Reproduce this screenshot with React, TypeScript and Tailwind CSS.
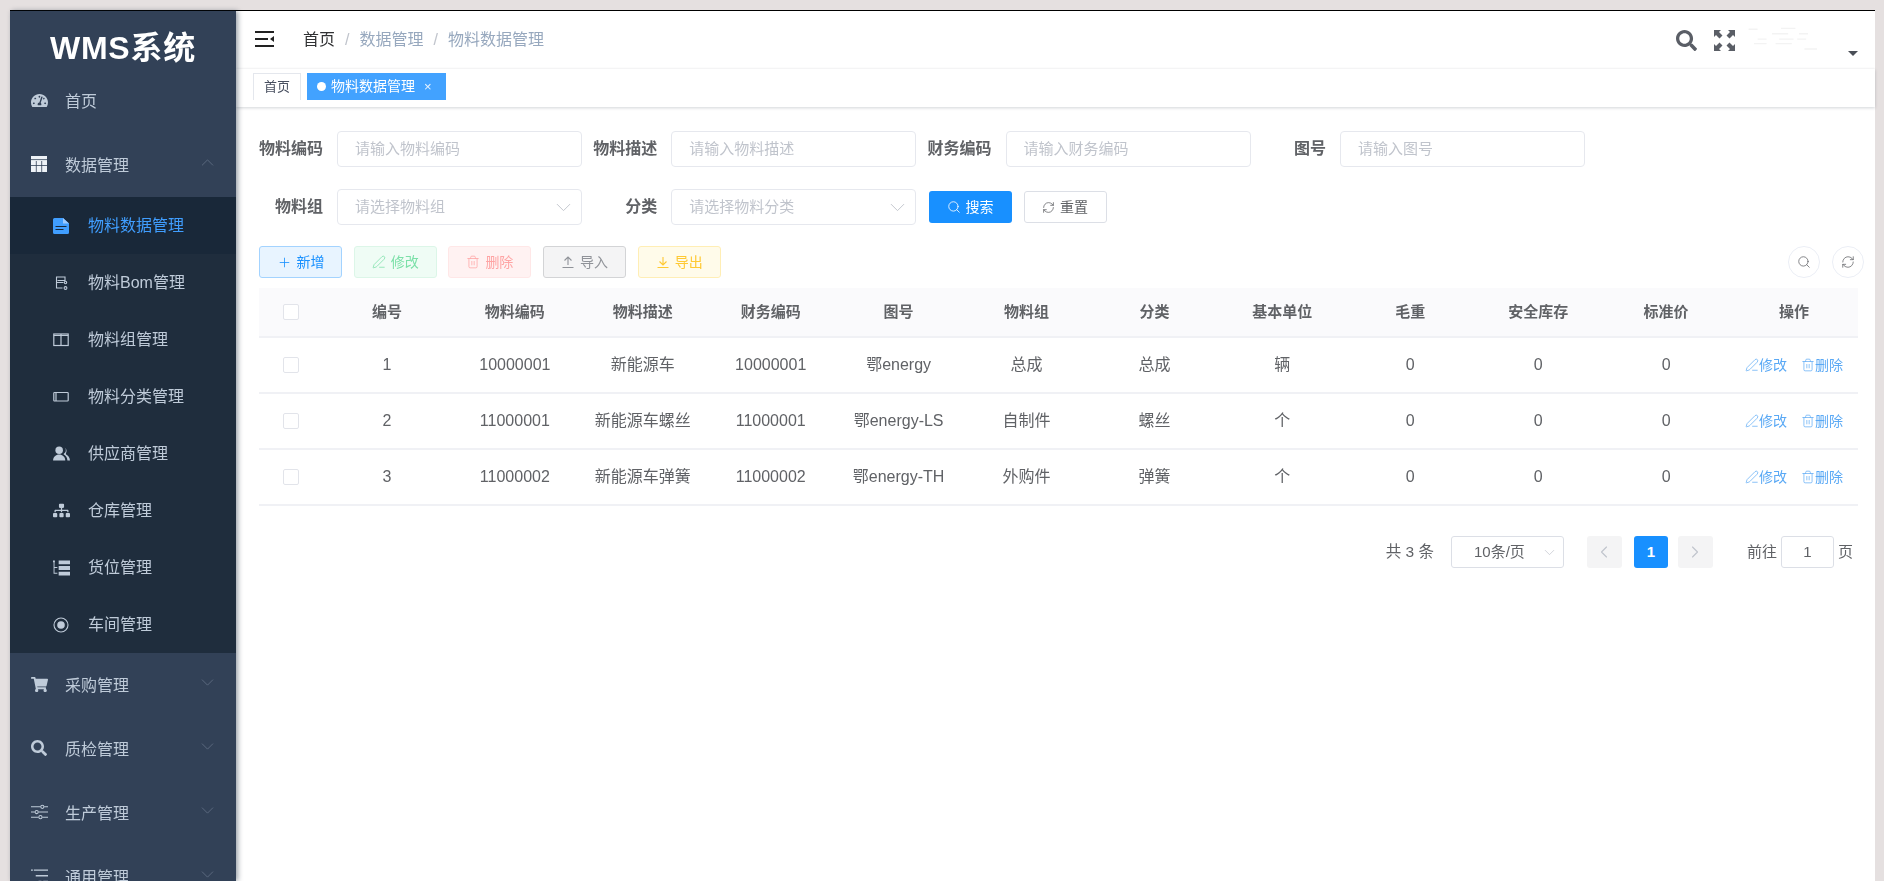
import { Search, RefreshCw, ChevronDown, ChevronUp, ChevronLeft, ChevronRight, Plus, Trash2, PenLine } from "lucide-react";
import { FaTachometerAlt, FaShoppingCart, FaSearch, FaSitemap } from "react-icons/fa";
import type { ReactNode } from "react";

const FONT = "font-['Liberation_Sans','Noto_Sans_CJK_SC',sans-serif]";

// Small sidebar glyphs that the icon packs don't carry in this shape.
const TableIcon = () => (
  <svg viewBox="0 0 16 16" className="w-4 h-4">
    <rect width="16" height="16" fill="#eef2f7" />
    <path d="M0 3.6h16M5.3 5v11M10.7 5v11M0 9.5h16" stroke="#324157" strokeWidth="0.8" />
  </svg>
);
const FileIcon = () => (
  <svg viewBox="0 0 16 16" className="w-4 h-4">
    <path d="M1.5 0H10l6 5.5V14.5a1.5 1.5 0 0 1-1.5 1.5h-13A1.5 1.5 0 0 1 0 14.5v-13A1.5 1.5 0 0 1 1.5 0z" fill="currentColor" />
    <path d="M10 0v5.5h6" fill="#9ccaff" />
    <path d="M2.5 8.5h11M2.5 11.5h8" stroke="#192839" strokeWidth="1.2" />
  </svg>
);
const BomIcon = () => (
  <svg viewBox="0 0 14 14" className="w-[14px] h-[14px]" fill="none" stroke="currentColor" strokeWidth="1.1">
    <path d="M2 1h9v3.5H3.5M2.5 1v11h6M2.5 6.5h7" />
    <circle cx="11.5" cy="6.5" r="1.2" />
    <circle cx="11.5" cy="12" r="1.4" />
  </svg>
);
const ColumnsIcon = () => (
  <svg viewBox="0 0 16 16" className="w-4 h-4" fill="none" stroke="currentColor" strokeWidth="1.2">
    <rect x="0.8" y="2" width="14.4" height="11.5" />
    <path d="M8 2v11.5M0.8 3.5h14.4" />
  </svg>
);
const RectIcon = () => (
  <svg viewBox="0 0 16 16" className="w-4 h-4" fill="none" stroke="currentColor" strokeWidth="1.2">
    <rect x="0.8" y="3.5" width="14.4" height="8.5" rx="0.8" />
    <path d="M3 3.5v8.5" />
  </svg>
);
const UsersIcon = () => (
  <svg viewBox="0 0 18 16" className="w-[17px] h-[15px]" fill="currentColor">
    <circle cx="6.5" cy="4.5" r="4" />
    <path d="M0 15.5c0-4 3-6.5 6.5-6.5s6.5 2.5 6.5 6.5z" />
    <path d="M10.5 .7a4 4 0 0 1 1 7.5c-.5.3-.3.6 0 .8 2 1 3.8 3.5 3.8 6.5H18c0-3.5-2-5.500-4-6.500-.4-.2-.5-.5-.2-.9a5 5 0 0 0-3.300-7.400z" />
  </svg>
);
const TreeListIcon = () => (
  <svg viewBox="0 0 18 16" className="w-[17px] h-4" fill="currentColor">
    <path d="M0 0h2v2H0zM0.6 2h1v12h-1zM1.6 7h3v1h-3zM1.6 13h3v1h-3z" />
    <path d="M6 0h12v4H6zM6 6h12v4H6zM6 12h12v4H6z" />
  </svg>
);
const RadioIcon = () => (
  <svg viewBox="0 0 16 16" className="w-4 h-4" fill="currentColor">
    <circle cx="8" cy="8" r="7" fill="none" stroke="currentColor" strokeWidth="1.1" />
    <circle cx="8" cy="8" r="3.8" />
  </svg>
);
const SlidersIcon = () => (
  <svg viewBox="0 0 18 16" className="w-[17px] h-4" fill="none" stroke="currentColor" strokeWidth="1.1">
    <path d="M0 2.5h10M14 2.5h4M0 8h4M8 8h10M0 13.5h8M12 13.5h6" />
    <circle cx="12" cy="2.5" r="1.7" />
    <circle cx="6" cy="8" r="1.7" />
    <circle cx="10" cy="13.5" r="1.7" />
  </svg>
);
const ListIcon = () => (
  <svg viewBox="0 0 18 16" className="w-[17px] h-4" fill="currentColor">
    <path d="M0 1h2v1.5H0zM3 1h15v1.5H3zM5 7h13v1.5H5zM8 13h3v1.5H8zM13 13h5v1.5h-5z" />
  </svg>
);
const HamburgerIcon = () => (
  <svg viewBox="0 0 19 16" className="w-[19px] h-4 -mt-[2px]" fill="#222">
    <path d="M0 0h19v2H0zM0 7h13v2H0zM0 14h19v2H0z" />
    <path d="M19 5v6l-4-3z" />
  </svg>
);
const FullscreenIcon = () => (
  <svg viewBox="0 0 21 21" className="w-[21px] h-[21px]" fill="#5a5e66">
    <path d="M0 0h7L5 2l3.5 3.5-3 3L2 5 0 7zM21 0v7l-2-2-3.5 3.5-3-3L16 2l-2-2zM0 21v-7l2 2 3.5-3.5 3 3L5 19l2 2zM21 21h-7l2-2-3.5-3.5 3-3L19 16l2-2z" />
  </svg>
);
// Arrow over a base line, as the import / export buttons show it.
const ImportIcon = () => (
  <svg viewBox="0 0 14 14" className="w-[14px] h-[14px]" fill="none" stroke="currentColor" strokeWidth="1.1">
    <path d="M1.5 12.5h11M7 10V2M3.5 5.5 7 2l3.5 3.5" />
  </svg>
);
const ExportIcon = () => (
  <svg viewBox="0 0 14 14" className="w-[14px] h-[14px]" fill="none" stroke="currentColor" strokeWidth="1.1">
    <path d="M1.5 12.5h11M7 2v8M3.5 6.5 7 10l3.5-3.5" />
  </svg>
);

const subMenu: { label: string; icon: ReactNode; active?: boolean }[] = [
  { label: "物料数据管理", icon: <FileIcon />, active: true },
  { label: "物料Bom管理", icon: <BomIcon /> },
  { label: "物料组管理", icon: <ColumnsIcon /> },
  { label: "物料分类管理", icon: <RectIcon /> },
  { label: "供应商管理", icon: <UsersIcon /> },
  { label: "仓库管理", icon: <FaSitemap className="w-[17px] h-[17px]" /> },
  { label: "货位管理", icon: <TreeListIcon /> },
  { label: "车间管理", icon: <RadioIcon /> },
];

const bottomMenu: { label: string; icon: ReactNode }[] = [
  { label: "采购管理", icon: <FaShoppingCart className="w-[17px] h-[17px]" /> },
  { label: "质检管理", icon: <FaSearch className="w-[16px] h-[16px]" /> },
  { label: "生产管理", icon: <SlidersIcon /> },
  { label: "通用管理", icon: <ListIcon /> },
];

function MenuRow({ icon, label, arrow }: { icon: ReactNode; label: string; arrow?: "up" | "down" }) {
  return (
    <div className="h-16 shrink-0 flex items-center pl-[20px] pr-[18px] text-[#bfcbd9] text-base">
      <span className="w-[18px] flex justify-center -mt-[2px]">{icon}</span>
      <span className="ml-[17px] flex-1 pt-[1px]">{label}</span>
      {arrow === "up" && <ChevronUp className="w-[21px] h-[21px] text-[#5f6d82] -mt-[5px]" strokeWidth={1} />}
      {arrow === "down" && <ChevronDown className="w-[21px] h-[21px] text-[#5f6d82] -mt-[5px]" strokeWidth={1} />}
    </div>
  );
}

function Sidebar() {
  return (
    <aside className="w-[226px] shrink-0 h-full overflow-hidden bg-[#324157] flex flex-col shadow-[2px_0_5px_rgba(0,21,41,0.4)] z-10">
      <div className="h-[58px] shrink-0 pt-[15px] flex items-center justify-center text-white font-bold text-[32px] tracking-[0.8px]">WMS系统</div>
      <MenuRow icon={<FaTachometerAlt className="w-[17px] h-[17px]" />} label="首页" />
      <MenuRow icon={<TableIcon />} label="数据管理" arrow="up" />
      <div className="bg-[#1f2d3d] shrink-0">
        {subMenu.map((m) => (
          <div
            key={m.label}
            className={m.active ? "h-[57px] flex items-center pl-[42px] text-[#409eff] bg-[#192839]" : "h-[57px] flex items-center pl-[42px] text-[#bfcbd9]"}
          >
            <span className="w-[18px] flex justify-center">{m.icon}</span>
            <span className="ml-[18px] text-base pt-[1px]">{m.label}</span>
          </div>
        ))}
      </div>
      {bottomMenu.map((m) => (
        <MenuRow key={m.label} icon={m.icon} label={m.label} arrow="down" />
      ))}
    </aside>
  );
}

function Header() {
  return (
    <div className="h-[58px] shrink-0 flex items-center pl-[19px] pr-[16px]">
      <HamburgerIcon />
      <div className="ml-[29px] flex items-center text-base text-[#97a8be]">
        <span className="text-[#303133]">首页</span>
        <span className="mx-[10px] text-[#c0c4cc]">/</span>
        <span>数据管理</span>
        <span className="mx-[10px] text-[#c0c4cc]">/</span>
        <span>物料数据管理</span>
      </div>
      <div className="ml-auto flex items-center">
        <FaSearch className="w-[21px] h-[21px] text-[#5a5e66]" />
        <span className="ml-[17px]"><FullscreenIcon /></span>
        <div className="relative w-[124px] h-[30px]">
          <svg viewBox="0 0 100 30" className="absolute left-[10px] top-0 w-[90px] h-[30px]" stroke="#f3f3f3" strokeWidth="1.5">
            <path d="M4 3h10M40 2h16M30 8h18M60 8h10M14 14h10M38 14h16M58 14h10M10 19h14M34 19h18M66 25h14" />
          </svg>
          <span className="absolute right-[1px] -bottom-[1px] w-0 h-0 border-x-[5px] border-x-transparent border-t-[5px] border-t-[#4a4f57]" />
        </div>
      </div>
    </div>
  );
}

function Tags() {
  return (
    <div className="h-[38px] shrink-0 flex items-start gap-[6px] pl-[17px] pt-[4px] shadow-[0_1px_3px_rgba(0,21,41,0.18),0_-1px_2px_rgba(0,0,0,0.03)] bg-white">
      <div className="w-[48px] h-[27px] flex items-center justify-center border border-b-0 border-[#e4e7ed] text-[13px] text-[#495060]">首页</div>
      <div className="w-[139px] h-[27px] flex items-center pl-[10px] bg-[#42a2ff] text-white text-[14px]">
        <span className="w-[9px] h-[9px] rounded-full bg-white mr-[5px]" />
        物料数据管理
        <span className="ml-[9px] text-[13px] text-[#e8f3ff]">×</span>
      </div>
    </div>
  );
}

function FormItem({ label, placeholder, select }: { label: string; placeholder: string; select?: boolean }) {
  return (
    <div className="w-[334.3px] shrink-0 flex items-center">
      <span className="w-[70px] text-right font-bold text-base text-[#606266] whitespace-nowrap">{label}</span>
      <div className="ml-[14px] w-[245px] h-9 border border-[#e6e8ee] rounded-[4px] flex items-center pl-[17px] pr-[5px] text-[15px] text-[#c0c4cc] bg-white">
        <span className="flex-1">{placeholder}</span>
        {select && <ChevronDown className="w-[25px] h-[25px] text-[#c0c4cc]" strokeWidth={0.9} />}
      </div>
    </div>
  );
}

const toolButtons = [
  { label: "新增", icon: <Plus className="w-[15px] h-[15px]" strokeWidth={1.3} />, cls: "bg-[#e8f4ff] border-[#a3d3ff] text-[#1890ff]" },
  { label: "修改", icon: <PenLine className="w-[14px] h-[14px]" strokeWidth={1.3} />, cls: "bg-[#effcf5] border-[#dcf6e8] text-[#7be0a8]" },
  { label: "删除", icon: <Trash2 className="w-[14px] h-[14px]" strokeWidth={1.3} />, cls: "bg-[#fff2f2] border-[#ffe7e7] text-[#ffa4a4]" },
  { label: "导入", icon: <ImportIcon />, cls: "bg-[#f4f4f5] border-[#d3d4d6] text-[#909399]" },
  { label: "导出", icon: <ExportIcon />, cls: "bg-[#fffbea] border-[#ffeeb5] text-[#ffc933]" },
];

function Toolbar() {
  return (
    <div className="ml-[6px] mt-[21px] flex items-start">
      <div className="flex gap-[11.7px]">
        {toolButtons.map((b) => (
          <div key={b.label} className={"w-[83px] h-8 border rounded-[3px] flex items-center justify-center gap-[5px] text-[14px] " + b.cls}>
            {b.icon}
            {b.label}
          </div>
        ))}
      </div>
      <div className="ml-auto mr-[11px] flex gap-3">
        <div className="w-8 h-8 rounded-full border border-[#ebeef5] flex items-center justify-center text-[#606266]">
          <Search className="w-[14px] h-[14px]" strokeWidth={1.3} />
        </div>
        <div className="w-8 h-8 rounded-full border border-[#ebeef5] flex items-center justify-center text-[#606266]">
          <RefreshCw className="w-[14px] h-[14px]" strokeWidth={1.3} />
        </div>
      </div>
    </div>
  );
}

const columns = ["编号", "物料编码", "物料描述", "财务编码", "图号", "物料组", "分类", "基本单位", "毛重", "安全库存", "标准价", "操作"];
const rows = [
  ["1", "10000001", "新能源车", "10000001", "鄂energy", "总成", "总成", "辆", "0", "0", "0"],
  ["2", "11000001", "新能源车螺丝", "11000001", "鄂energy-LS", "自制件", "螺丝", "个", "0", "0", "0"],
  ["3", "11000002", "新能源车弹簧", "11000002", "鄂energy-TH", "外购件", "弹簧", "个", "0", "0", "0"],
];

const Checkbox = () => <span className="w-4 h-4 border border-[#e2e4ea] rounded-[2px] bg-white" />;

function MaterialTable() {
  return (
    <div className="ml-[6px] mt-[10px] w-[1599px] text-base">
      <div className="h-[50px] grid grid-cols-[64px_repeat(12,1fr)] items-center bg-[#fafafc] border-b-2 border-[#f0f1f5] text-[#606266] text-[15px] font-bold text-center">
        <span className="flex justify-center"><Checkbox /></span>
        {columns.map((c) => (
          <span key={c}>{c}</span>
        ))}
      </div>
      {rows.map((r) => (
        <div key={r[0]} className="h-[56px] grid grid-cols-[64px_repeat(12,1fr)] items-center border-b-2 border-[#f0f1f5] text-[#606266] text-center">
          <span className="flex justify-center"><Checkbox /></span>
          {r.map((v, i) => (
            <span key={i} className="pb-[1px]">{v}</span>
          ))}
          <span className="flex justify-center items-center gap-[14px] text-[14px] text-[#5aa9f5]">
            <span className="flex items-center"><PenLine className="w-[14px] h-[14px]" strokeWidth={1.2} />修改</span>
            <span className="flex items-center"><Trash2 className="w-[14px] h-[14px]" strokeWidth={1.2} />删除</span>
          </span>
        </div>
      ))}
    </div>
  );
}

function Pager() {
  return (
    <div className="ml-[6px] mt-[30px] w-[1594px] flex justify-end items-center h-8 text-[#606266] text-[15px]">
      <span className="text-[15.5px]">共 3 条</span>
      <div className="ml-[17px] w-[113px] h-8 border border-[#dcdfe6] rounded-[3px] flex items-center pl-[22px] pr-[5px]">
        <span className="flex-1">10条/页</span>
        <ChevronDown className="w-[17px] h-[17px] text-[#c0c4cc]" strokeWidth={1} />
      </div>
      <div className="ml-[23px] w-[35px] h-8 bg-[#f4f4f5] rounded-[3px] flex items-center justify-center text-[#c0c4cc]">
        <ChevronLeft className="w-5 h-5" strokeWidth={1.3} />
      </div>
      <div className="ml-[12px] w-[34px] h-8 bg-[#1890ff] rounded-[3px] flex items-center justify-center text-white font-bold">1</div>
      <div className="ml-[10px] w-[35px] h-8 bg-[#f4f4f5] rounded-[3px] flex items-center justify-center text-[#c0c4cc]">
        <ChevronRight className="w-5 h-5" strokeWidth={1.3} />
      </div>
      <span className="ml-[34px]">前往</span>
      <div className="ml-[4px] w-[53px] h-8 border border-[#dcdfe6] rounded-[3px] flex items-center justify-center">1</div>
      <span className="ml-[4px]">页</span>
    </div>
  );
}

export default function App() {
  return (
    <div className={"w-[1884px] h-[881px] overflow-hidden bg-[#e5e0e0] pl-[10px] pr-[9px] pt-[10px] " + FONT}>
      <div className="h-full flex border-t border-black bg-white">
        <Sidebar />
        <main className="flex-1 min-w-0 flex flex-col blur-[0.4px]">
          <Header />
          <Tags />
          <div className="pl-[17px] pt-[24px]">
            <div className="flex">
              <FormItem label="物料编码" placeholder="请输入物料编码" />
              <FormItem label="物料描述" placeholder="请输入物料描述" />
              <FormItem label="财务编码" placeholder="请输入财务编码" />
              <FormItem label="图号" placeholder="请输入图号" />
            </div>
            <div className="flex items-center mt-[22px]">
              <FormItem label="物料组" placeholder="请选择物料组" select />
              <FormItem label="分类" placeholder="请选择物料分类" select />
              <div className="ml-[7px] w-[83px] h-8 rounded-[3px] bg-[#1890ff] text-white text-[14px] flex items-center justify-center gap-[5px]">
                <Search className="w-[14px] h-[14px]" strokeWidth={1.4} />搜索
              </div>
              <div className="ml-[12px] w-[83px] h-8 rounded-[3px] border border-[#dcdfe6] text-[#606266] text-[14px] flex items-center justify-center gap-[5px]">
                <RefreshCw className="w-[13px] h-[13px]" strokeWidth={1.4} />重置
              </div>
            </div>
            <Toolbar />
            <MaterialTable />
            <Pager />
          </div>
        </main>
      </div>
    </div>
  );
}
